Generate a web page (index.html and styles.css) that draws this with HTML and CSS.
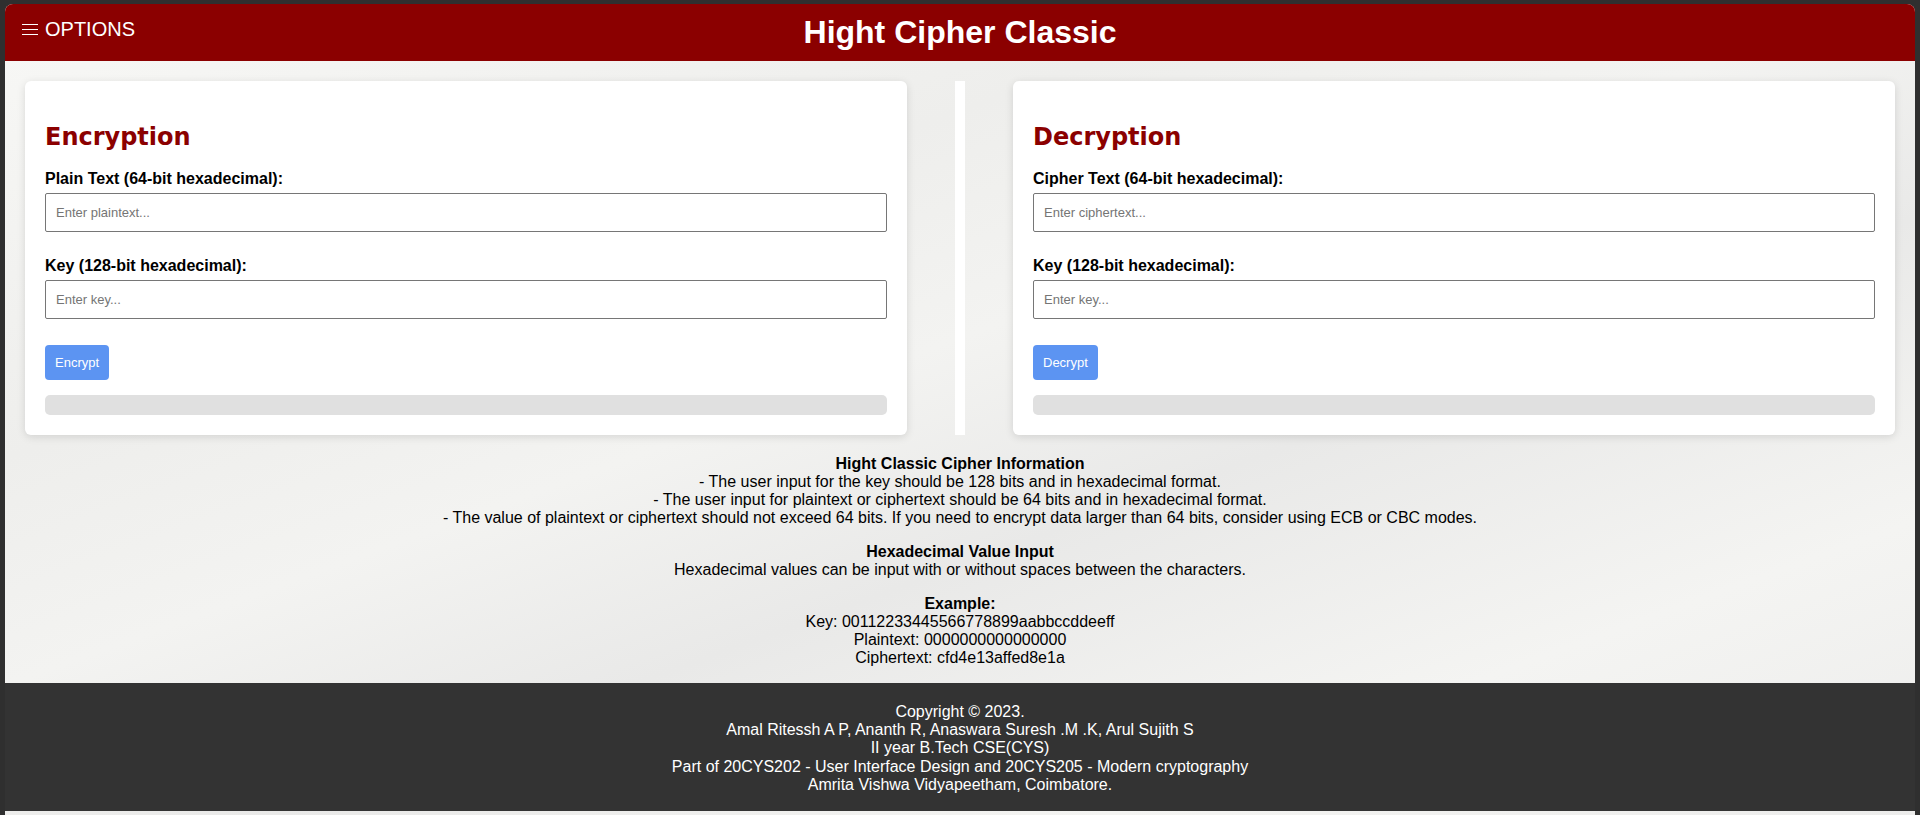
FILE: index.html
```html
<!DOCTYPE html>
<html lang="en">
<head>
<meta charset="utf-8">
<title>Hight Cipher Classic</title>
<link rel="stylesheet" href="styles.css">
</head>
<body>
<div class="frame">
  <header class="topbar">
    <div class="menu-toggle">
      <svg class="menu-icon" width="16" height="14" viewBox="0 0 16 14" aria-hidden="true">
        <line x1="0" y1="1.5" x2="16" y2="1.5" stroke="#fff" stroke-width="1.2"/>
        <line x1="0" y1="6.5" x2="16" y2="6.5" stroke="#fff" stroke-width="1.2"/>
        <line x1="0" y1="11.5" x2="16" y2="11.5" stroke="#fff" stroke-width="1.2"/>
      </svg>
      <span>OPTIONS</span>
    </div>
    <h1 class="title">Hight Cipher Classic</h1>
    <div class="spacer"></div>
  </header>

  <main class="content">
    <div class="panels">
      <section class="card">
        <h2 class="card-title">Encryption</h2>
        <label class="field-label" for="pt">Plain Text (64-bit hexadecimal):</label>
        <input class="field" id="pt" type="text" placeholder="Enter plaintext...">
        <label class="field-label" for="ek">Key (128-bit hexadecimal):</label>
        <input class="field" id="ek" type="text" placeholder="Enter key...">
        <button class="btn" type="button">Encrypt</button>
        <div class="result"></div>
      </section>
      <div class="divider"></div>
      <section class="card">
        <h2 class="card-title">Decryption</h2>
        <label class="field-label" for="ct">Cipher Text (64-bit hexadecimal):</label>
        <input class="field" id="ct" type="text" placeholder="Enter ciphertext...">
        <label class="field-label" for="dk">Key (128-bit hexadecimal):</label>
        <input class="field" id="dk" type="text" placeholder="Enter key...">
        <button class="btn" type="button">Decrypt</button>
        <div class="result"></div>
      </section>
    </div>

    <div class="info">
      <p><b>Hight Classic Cipher Information</b><br>
      - The user input for the key should be 128 bits and in hexadecimal format.<br>
      - The user input for plaintext or ciphertext should be 64 bits and in hexadecimal format.<br>
      - The value of plaintext or ciphertext should not exceed 64 bits. If you need to encrypt data larger than 64 bits, consider using ECB or CBC modes.</p>
      <p><b>Hexadecimal Value Input</b><br>
      Hexadecimal values can be input with or without spaces between the characters.</p>
      <p><b>Example:</b><br>
      Key: 00112233445566778899aabbccddeeff<br>
      Plaintext: 0000000000000000<br>
      Ciphertext: cfd4e13affed8e1a</p>
    </div>
  </main>

  <footer class="footer">
    Copyright © 2023.<br>
    Amal Ritessh A P, Ananth R, Anaswara Suresh .M .K, Arul Sujith S<br>
    II year B.Tech CSE(CYS)<br>
    Part of 20CYS202 - User Interface Design and 20CYS205 - Modern cryptography<br>
    Amrita Vishwa Vidyapeetham, Coimbatore.
  </footer>
</div>
</body>
</html>
```

FILE: styles.css
```css
html, body {
  margin: 0;
  padding: 0;
}

body {
  background: #2f2f2f;
  font-family: "Liberation Sans", Arial, sans-serif;
  font-size: 16px;
  color: #000;
  padding: 4px 5px 0 5px;
  height: 815px;
  box-sizing: border-box;
  overflow: hidden;
}

.frame {
  border-radius: 8px 8px 0 0;
  overflow: hidden;
  background: linear-gradient(160deg, #f8f8f6 0%, #eeeeec 30%, #f3f3f1 45%, #e9e9e8 60%, #f4f4f2 80%, #ececeb 100%);
  min-height: 820px;
}

.topbar {
  background: #8b0000;
  color: #fff;
  height: 57px;
  display: grid;
  grid-template-columns: 1fr auto 1fr;
  align-items: start;
}

.menu-toggle {
  display: flex;
  align-items: center;
  gap: 7px;
  padding-left: 17px;
  padding-top: 14px;
  font-size: 20px;
  line-height: 23px;
}

.menu-icon {
  display: block;
  margin-top: 1px;
}

.title {
  margin: 0;
  padding-top: 10px;
  font-size: 32px;
  font-weight: bold;
  line-height: 37px;
  text-align: center;
}

.content {
  padding: 20px 20px 0 20px;
}

.panels {
  display: flex;
  align-items: stretch;
}

.card {
  flex: 1;
  background: #fff;
  border-radius: 6px;
  box-shadow: 0 2px 8px rgba(0, 0, 0, 0.12);
  padding: 20px;
  display: flex;
  flex-direction: column;
  align-items: flex-start;
}

.divider {
  width: 10px;
  background: #fff;
  margin: 0 48px;
}

.card-title {
  font-family: "DejaVu Sans", Verdana, sans-serif;
  font-size: 24px;
  font-weight: bold;
  color: #8b0000;
  margin: 22px 0 19px;
  line-height: 28px;
}

.field-label {
  font-weight: bold;
  font-size: 16px;
  line-height: 18px;
  margin-bottom: 5px;
}

.field {
  width: 100%;
  box-sizing: border-box;
  height: 39px;
  border: 1px solid #767676;
  border-radius: 2px;
  padding: 0 10px;
  font-family: "Liberation Sans", Arial, sans-serif;
  font-size: 13px;
  margin: 0 0 25px 0;
  background: #fff;
}

.field::placeholder {
  color: #757575;
}

.btn {
  margin-top: 1px;
  background: #5c94f2;
  color: #fff;
  border: none;
  border-radius: 4px;
  padding: 0 10px;
  height: 35px;
  font-family: "Liberation Sans", Arial, sans-serif;
  font-size: 13px;
}

.result {
  align-self: stretch;
  height: 20px;
  background: #e0e0e0;
  border-radius: 5px;
  margin-top: 15px;
}

.info {
  text-align: center;
  padding-top: 4px;
}

.info p {
  margin: 16px 0;
  line-height: 18px;
}

.footer {
  background: #333;
  color: #fff;
  text-align: center;
  padding: 20px 0 17px;
  line-height: 18.2px;
}
```
